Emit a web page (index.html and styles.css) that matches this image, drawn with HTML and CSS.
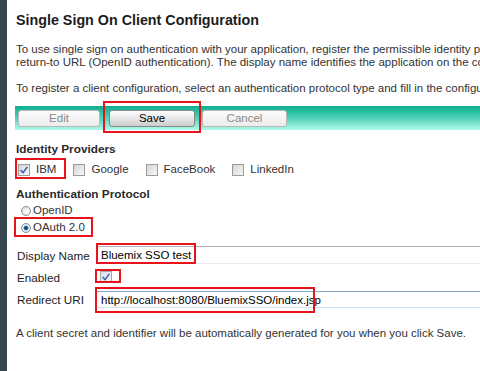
FILE: index.html
```html
<!DOCTYPE html>
<html>
<head>
<meta charset="utf-8">
<title>Single Sign On Client Configuration</title>
<link rel="stylesheet" href="styles.css">
</head>
<body>
<div class="page">
  <div class="sidebar"></div>
  <main class="content">
    <h1 class="title">Single Sign On Client Configuration</h1>
    <p class="text">To use single sign on authentication with your application, register the permissible identity providers and the<br>return-to URL (OpenID authentication). The display name identifies the application on the consent page.</p>
    <p class="text second">To register a client configuration, select an authentication protocol type and fill in the configuration fields.</p>

    <div class="toolbar">
      <button class="btn btn-edit" disabled>Edit</button>
      <button class="btn btn-save hl hl-save">Save</button>
      <button class="btn btn-cancel" disabled>Cancel</button>
    </div>

    <h2 class="section">Identity Providers</h2>
    <div class="providers">
      <label class="check-item hl hl-ibm"><span class="cb checked"><svg viewBox="0 0 12 12" width="12" height="12"><path d="M2.6 6 L5 8.6 L9.4 2.8" fill="none" stroke="#2f4fb0" stroke-width="1.4"/></svg></span>IBM</label>
      <label class="check-item"><span class="cb"></span>Google</label>
      <label class="check-item"><span class="cb"></span>FaceBook</label>
      <label class="check-item"><span class="cb"></span>LinkedIn</label>
    </div>

    <h2 class="section proto">Authentication Protocol</h2>
    <div class="radios">
      <label class="radio-item"><span class="rb"></span>OpenID</label>
      <label class="radio-item hl hl-oauth"><span class="rb selected"></span>OAuth 2.0</label>
    </div>

    <div class="form">
      <span class="lbl">Display Name</span>
      <div class="field f-name hl hl-name"><span class="input">Bluemix SSO test</span></div>
      <span class="lbl">Enabled</span>
      <div class="field f-enabled"><span class="cb checked soft hl hl-enabled"><svg viewBox="0 0 12 12" width="12" height="12"><path d="M2.6 6 L5 8.6 L9.4 2.8" fill="none" stroke="#3a58b4" stroke-width="1.4"/></svg></span></div>
      <span class="lbl">Redirect URI</span>
      <div class="field f-uri hl hl-uri"><span class="input focused">http://localhost:8080/BluemixSSO/index.jsp</span></div>
    </div>

    <p class="text note">A client secret and identifier will be automatically generated for you when you click Save.</p>
  </main>
</div>
</body>
</html>
```

FILE: styles.css
```css
html, body {
  margin: 0;
  padding: 0;
  background: #ffffff;
  overflow: hidden;
}
body {
  font-family: "Liberation Sans", Arial, sans-serif;
  color: #333333;
  font-size: 11.5px;
}
.page {
  display: flex;
  width: 480px;
  height: 371px;
  overflow: hidden;
}
.sidebar {
  flex: 0 0 7px;
  background: #37474f;
}
.content {
  flex: 1 1 auto;
  min-width: 0;
  padding-left: 9px;
  white-space: nowrap;
  overflow: hidden;
}
.title {
  margin: 11px 0 0 0;
  font-size: 14.3px;
  line-height: 18px;
  font-weight: bold;
  color: #1c1c1c;
}
.text {
  margin: 14px 0 0 0;
  line-height: 13px;
  font-size: 11.5px;
}
.text.second {
  margin-top: 13px;
}
.toolbar {
  margin-top: 11px;
  margin-left: -1px;
  height: 24px;
  box-sizing: border-box;
  padding: 4px 0 0 3px;
  display: flex;
  align-items: flex-start;
  background: linear-gradient(#10ae90, #45cdb1 45%, #b2fbec);
  width: 600px;
}
.btn {
  height: 17px;
  box-sizing: border-box;
  padding: 0;
  border-radius: 3px;
  font-family: "Liberation Sans", Arial, sans-serif;
  font-size: 11.5px;
  line-height: 15px;
  text-align: center;
}
.btn-edit, .btn-cancel {
  background: linear-gradient(#fbfbfb, #ececec);
  border: 1px solid #b9b9b9;
  color: #8a8a8a;
}
.btn-edit { width: 82px; margin-right: 9px; }
.btn-cancel { width: 85px; }
.btn-save {
  width: 86px;
  margin-right: 7px;
  background: linear-gradient(#fefefe, #e6e6e6 50%, #cdcdcd);
  border: 1px solid #8a8a8a;
  color: #000000;
}
.hl { position: relative; }
.hl::after {
  content: "";
  position: absolute;
  border: 2px solid #e8141b;
  pointer-events: none;
}
.hl-save::after { left: -7px; right: -7px; top: -10px; bottom: -7px; }
.section {
  margin: 12px 0 0 0;
  font-size: 11.8px;
  line-height: 14px;
  font-weight: bold;
  color: #2a2a2a;
}
.section.proto { margin-top: 10px; }
.providers {
  display: flex;
  align-items: center;
  margin-top: 6px;
  height: 15px;
  padding-left: 2px;
}
.check-item {
  display: flex;
  align-items: center;
  gap: 6px;
  font-size: 11.5px;
  line-height: 15px;
  margin-right: 17px;
}
.cb {
  display: inline-block;
  flex: 0 0 auto;
  width: 12px;
  height: 12px;
  box-sizing: border-box;
  border: 1px solid #9a9a9a;
  background: linear-gradient(135deg, #d6d6d6, #f7f7f7);
}
.cb.soft {
  border-color: #a3abb5;
  background: linear-gradient(135deg, #d9dee6, #f3f5f8);
}
.cb svg { display: block; margin: -1px; }
.hl-ibm::after { left: -3px; right: -10px; top: -4px; bottom: -2px; }
.radios {
  margin-top: 1px;
  padding-left: 5px;
}
.radio-item {
  display: flex;
  align-items: center;
  gap: 2px;
  line-height: 17px;
  font-size: 11.5px;
  width: fit-content;
}
.rb {
  display: inline-block;
  flex: 0 0 auto;
  width: 10px;
  height: 10px;
  box-sizing: border-box;
  border-radius: 50%;
  border: 1px solid #8e8e8e;
  background: radial-gradient(circle at 60% 60%, #ffffff, #d4d4d4);
}
.rb.selected {
  background: radial-gradient(circle, #0a3a6a 0, #1f629a 1.8px, #e9f3fb 2.8px, #cfd8e2 5px);
}
.hl-oauth::after { left: -7px; right: -8px; top: -2px; bottom: -1px; }
.form {
  margin-top: 8px;
  display: grid;
  grid-template-columns: 80px 1fr;
  grid-template-rows: 22px 22px 23px;
  align-items: center;
  padding-left: 1px;
}
.lbl {
  font-size: 11.7px;
  color: #222222;
  line-height: 16px;
  padding-top: 1px;
}
.field {
  display: flex;
  align-items: center;
  height: 100%;
}
.input {
  display: block;
  width: 600px;
  height: 18px;
  box-sizing: border-box;
  border-top: 1px solid #b2b2b2;
  border-bottom: 1px solid #e4ebf2;
  padding: 1px 0 0 4px;
  line-height: 15px;
  font-size: 11.5px;
  color: #000000;
}
.input.focused {
  height: 17px;
  border-top-color: #80a8cf;
  border-bottom-color: #d3e2f0;
}
.f-enabled { padding-left: 3px; }
.hl-name::after { left: -1px; width: 96px; top: -1px; bottom: 2px; }
.hl-enabled::after { left: -6px; right: -10px; top: -3px; bottom: -1px; }
.hl-uri::after { left: -2px; width: 216px; top: -1px; bottom: -2px; }
.note {
  margin-top: 16px;
  font-size: 11.5px;
}
```
